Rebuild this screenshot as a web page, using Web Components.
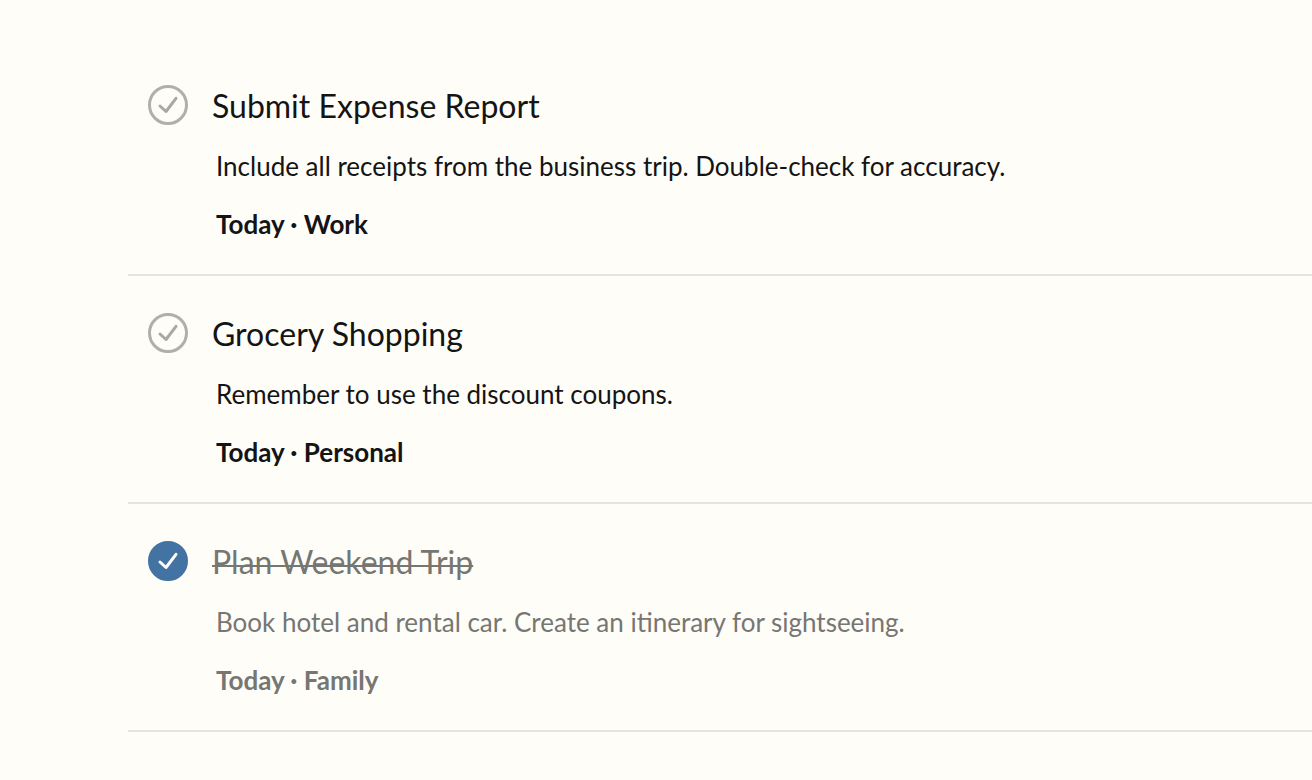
<!DOCTYPE html>
<html lang="en">
<head>
<meta charset="utf-8">
<meta name="viewport" content="width=device-width, initial-scale=1">
<title>Tasks</title>
<style>
body { margin: 0; background: #fffdf8; color: #141414; font-family: Lato, "Liberation Sans", sans-serif; }
</style>
</head>
<body>
<task-list>
  <task-item label="Submit Expense Report">
    <span slot="title">Submit Expense Report</span>
    <span slot="note">Include all receipts from the business trip. Double-check for accuracy.</span>
    <span slot="meta">Today · Work</span>
  </task-item>
  <task-item label="Grocery Shopping">
    <span slot="title">Grocery Shopping</span>
    <span slot="note">Remember to use the discount coupons.</span>
    <span slot="meta">Today · Personal</span>
  </task-item>
  <task-item label="Plan Weekend Trip" done>
    <span slot="title">Plan Weekend Trip</span>
    <span slot="note">Book hotel and rental car. Create an itinerary for sightseeing.</span>
    <span slot="meta">Today · Family</span>
  </task-item>
</task-list>

<template id="task-list-template">
  <style>
    :host { display: block; padding: 48px 0 48px 128px; }
  </style>
  <main><div role="list"><slot></slot></div></main>
</template>

<template id="task-item-template">
  <style>
    :host {
      display: grid;
      grid-template-columns: 40px 1fr;
      column-gap: 24px;
      padding: 37px 20px 33px;
      border-bottom: 2px solid #e5e4e0;
    }
    :host([done]) { color: #767673; }
    .check { position: relative; width: 40px; height: 40px; }
    input { appearance: none; display: block; width: 40px; height: 40px; margin: 0; box-sizing: border-box; border: 3px solid #b0afac; border-radius: 50%; cursor: pointer; }
    input:checked { background: #4273a3; border-color: #4273a3; }
    svg { position: absolute; inset: 0; pointer-events: none; fill: none; stroke: #a9a8a5; stroke-width: 3; stroke-linecap: round; stroke-linejoin: round; }
    input:checked + svg { stroke: #fff; }
    .text { display: flex; flex-direction: column; }
    h2, p { margin: 0; }
    h2 { font-size: 32px; line-height: 42px; font-weight: 400; }
    /* The strike runs low through the x-height, so it is set from the baseline. */
    :host([done]) h2 { text-decoration: underline 2px; text-underline-offset: -9px; text-decoration-skip-ink: none; }
    p { font-size: 26px; line-height: 34px; padding-left: 4px; }
    .note { margin-top: 22px; }
    .meta { margin-top: 24px; font-weight: 700; }
  </style>
  <div class="check">
    <input type="checkbox">
    <svg viewBox="0 0 40 40" aria-hidden="true"><path d="M12 21L18 26.500L28 13.300"/></svg>
  </div>
  <div class="text">
    <h2><slot name="title"></slot></h2>
    <p class="note"><slot name="note"></slot></p>
    <p class="meta"><slot name="meta"></slot></p>
  </div>
</template>

<script>
class TaskList extends HTMLElement {
  constructor() {
    super();
    this.attachShadow({ mode: "open" }).append(document.getElementById("task-list-template").content.cloneNode(true));
  }
}
class TaskItem extends HTMLElement {
  constructor() {
    super();
    this.attachShadow({ mode: "open" }).append(document.getElementById("task-item-template").content.cloneNode(true));
  }
  connectedCallback() {
    this.setAttribute("role", "listitem");
    const box = this.shadowRoot.querySelector("input");
    box.setAttribute("aria-label", this.getAttribute("label"));
    box.checked = this.hasAttribute("done");
    box.addEventListener("change", () => this.toggleAttribute("done", box.checked));
  }
}
customElements.define("task-list", TaskList);
customElements.define("task-item", TaskItem);
</script>
</body>
</html>
